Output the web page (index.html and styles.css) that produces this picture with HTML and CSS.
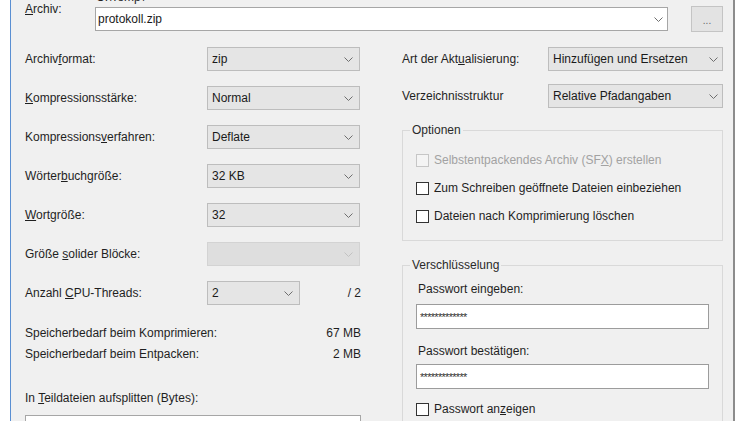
FILE: index.html
```html
<!DOCTYPE html>
<html lang="de">
<head>
<meta charset="utf-8">
<title>Zu Archiv hinzufügen</title>
<link rel="stylesheet" href="styles.css">
</head>
<body>
<div class="dialog">
  <div class="archive-row">
    <span class="archive-label"><u>A</u>rchiv:</span>
    <div class="archive-field">
      <div class="path">C:\Temp\</div>
      <div class="combo edit"><span>protokoll.zip</span><svg class="chev" width="9" height="5" viewBox="0 0 9 5"><polyline points="0.5,0.5 4.5,4.5 8.5,0.5"/></svg></div>
    </div>
    <div class="browse">...</div>
  </div>

  <div class="main">
    <div class="left">
      <div class="row"><span class="lbl">Archiv<u>f</u>ormat:</span><div class="combo"><span>zip</span><svg class="chev" width="9" height="5" viewBox="0 0 9 5"><polyline points="0.5,0.5 4.5,4.5 8.5,0.5"/></svg></div></div>
      <div class="row"><span class="lbl"><u>K</u>ompressionsstärke:</span><div class="combo"><span>Normal</span><svg class="chev" width="9" height="5" viewBox="0 0 9 5"><polyline points="0.5,0.5 4.5,4.5 8.5,0.5"/></svg></div></div>
      <div class="row"><span class="lbl">Kompressions<u>v</u>erfahren:</span><div class="combo"><span>Deflate</span><svg class="chev" width="9" height="5" viewBox="0 0 9 5"><polyline points="0.5,0.5 4.5,4.5 8.5,0.5"/></svg></div></div>
      <div class="row"><span class="lbl">Wörter<u>b</u>uchgröße:</span><div class="combo"><span>32 KB</span><svg class="chev" width="9" height="5" viewBox="0 0 9 5"><polyline points="0.5,0.5 4.5,4.5 8.5,0.5"/></svg></div></div>
      <div class="row"><span class="lbl"><u>W</u>ortgröße:</span><div class="combo"><span>32</span><svg class="chev" width="9" height="5" viewBox="0 0 9 5"><polyline points="0.5,0.5 4.5,4.5 8.5,0.5"/></svg></div></div>
      <div class="row"><span class="lbl">Größe <u>s</u>olider Blöcke:</span><div class="combo disabled"><span></span><svg class="chev" width="9" height="5" viewBox="0 0 9 5"><polyline points="0.5,0.5 4.5,4.5 8.5,0.5"/></svg></div></div>
      <div class="row"><span class="lbl">Anzahl <u>C</u>PU-Threads:</span><div class="combo short"><span>2</span><svg class="chev" width="9" height="5" viewBox="0 0 9 5"><polyline points="0.5,0.5 4.5,4.5 8.5,0.5"/></svg></div><span class="max">/ 2</span></div>

      <div class="mem first"><span>Speicherbedarf beim Komprimieren:</span><span>67 MB</span></div>
      <div class="mem"><span>Speicherbedarf beim Entpacken:</span><span>2 MB</span></div>

      <div class="split-label">In <u>T</u>eildateien aufsplitten (Bytes):</div>
      <div class="split-field"></div>
    </div>

    <div class="right">
      <div class="row"><span class="lbl-r">Art der Akt<u>u</u>alisierung:</span><div class="combo wide"><span>Hinzufügen und Ersetzen</span><svg class="chev" width="9" height="5" viewBox="0 0 9 5"><polyline points="0.5,0.5 4.5,4.5 8.5,0.5"/></svg></div></div>
      <div class="row second"><span class="lbl-r">Verzeichnisstruktur</span><div class="combo wide"><span>Relative Pfadangaben</span><svg class="chev" width="9" height="5" viewBox="0 0 9 5"><polyline points="0.5,0.5 4.5,4.5 8.5,0.5"/></svg></div></div>

      <fieldset class="group options">
        <legend>Optionen</legend>
        <div class="check disabled-check"><span class="box"></span><span>Selbstentpackendes Archiv (SF<u>X</u>) erstellen</span></div>
        <div class="check"><span class="box"></span><span>Zum Schreiben geöffnete Dateien einbeziehen</span></div>
        <div class="check"><span class="box"></span><span>Dateien nach Komprimierung löschen</span></div>
      </fieldset>

      <fieldset class="group crypt">
        <legend>Verschlüsselung</legend>
        <div class="pw-label">Passwort eingeben:</div>
        <div class="pw-field">*************</div>
        <div class="pw-label second-pw">Passwort bestätigen:</div>
        <div class="pw-field">*************</div>
        <div class="check show-pw"><span class="box"></span><span>Passwort an<u>z</u>eigen</span></div>
      </fieldset>
    </div>
  </div>
</div>
</body>
</html>
```

FILE: styles.css
```css
* { box-sizing: border-box; }

html, body {
  margin: 0;
  padding: 0;
  background: #ffffff;
}

body {
  width: 750px;
  height: 421px;
  overflow: hidden;
  font-family: "Liberation Sans", Arial, sans-serif;
  font-size: 12px;
  line-height: 14px;
  color: #1f1f1f;
}

u { text-decoration: underline; text-underline-offset: 1px; }

.dialog {
  margin-left: 10px;
  width: 725px;
  height: 421px;
  background: #f0f0f0;
  border-left: 1px solid #5a8fd2;
  border-right: 2px solid #8c8c8c;
  padding-left: 14px;
  overflow: hidden;
}

/* top archive row */
.archive-row {
  display: flex;
  align-items: flex-start;
  height: 31px;
}

.archive-label {
  width: 70px;
  margin-top: 2px;
}

.archive-field {
  width: 573px;
  margin-top: -10px;
}

.path {
  height: 14px;
  padding-left: 1px;
}

.browse {
  margin-left: 23px;
  margin-top: 6px;
  width: 32px;
  height: 26px;
  background: #e3e3e3;
  border: 1px solid #c4c4c4;
  color: #666;
  font-size: 10px;
  line-height: 10px;
  display: flex;
  align-items: center;
  justify-content: center;
  padding-top: 4px;
}

/* combos */
.combo {
  display: flex;
  align-items: center;
  justify-content: space-between;
  width: 153px;
  height: 24px;
  padding: 0 6px 0 4px;
  background: #e5e5e5;
  border: 1px solid #bdbdbd;
  color: #1a1a1a;
}

.combo.edit {
  width: 573px;
  margin-top: 3px;
  background: #ffffff;
  border-color: #a6a6a6;
  padding-left: 2px;
  padding-right: 4px;
}

.combo.short { width: 93px; }
.combo.wide { width: 175px; padding-right: 4px; }

.combo.disabled {
  background: #dedede;
  border-color: #d3d3d3;
}

.chev {
  flex: none;
  fill: none;
  stroke: #6e6e6e;
  stroke-width: 1;
}

.combo.disabled .chev { stroke: #c2c2c2; }

/* main two columns */
.main {
  display: flex;
  margin-top: 16px;
}

.left {
  width: 336px;
  display: flex;
  flex-direction: column;
}

.right {
  width: 321px;
  margin-left: 41px;
  display: flex;
  flex-direction: column;
}

.row {
  display: flex;
  align-items: center;
  height: 24px;
}

.left .row + .row { margin-top: 15px; }

.lbl { width: 182px; }
.lbl-r { width: 146px; }

.right .row.second { margin-top: 13px; }

.max {
  margin-left: auto;
  margin-right: 0;
}

.mem {
  display: flex;
  justify-content: space-between;
  margin-top: 7px;
}

.mem.first { margin-top: 21px; }

.split-label { margin-top: 30px; }

.split-field {
  margin-top: 10px;
  height: 24px;
  width: 336px;
  background: #fff;
  border: 1px solid #a6a6a6;
}

/* group boxes */
.group {
  margin: 0;
  min-width: 0;
  border: 1px solid #d9d9d9;
  padding: 16px 13px 17px 13px;
}

.group legend {
  padding: 0 2px;
  margin-left: -6px;
  line-height: 14px;
  color: #2a2a2a;
}

.options { margin-top: 15px; }

.check {
  display: flex;
  align-items: center;
  height: 14px;
}

.check + .check { margin-top: 14px; }

.box {
  width: 13px;
  height: 13px;
  border: 1px solid #333333;
  background: #ffffff;
  margin-right: 5px;
  flex: none;
}

.disabled-check { color: #a2a2a2; }
.disabled-check .box { border-color: #c6c6c6; background: #f4f4f4; }

.crypt {
  margin-top: 17px;
  padding-top: 10px;
  padding-bottom: 20px;
}

.pw-label {
  padding-left: 2px;
  margin-bottom: 8px;
}

.pw-label.second-pw {
  margin-top: 15px;
  margin-bottom: 6px;
}

.pw-field {
  width: 293px;
  height: 25px;
  background: #ffffff;
  border: 1px solid #9c9c9c;
  padding: 5px 0 0 3px;
  font-size: 11px;
  letter-spacing: -0.7px;
  color: #333;
}

.show-pw { margin-top: 13px; }
```
